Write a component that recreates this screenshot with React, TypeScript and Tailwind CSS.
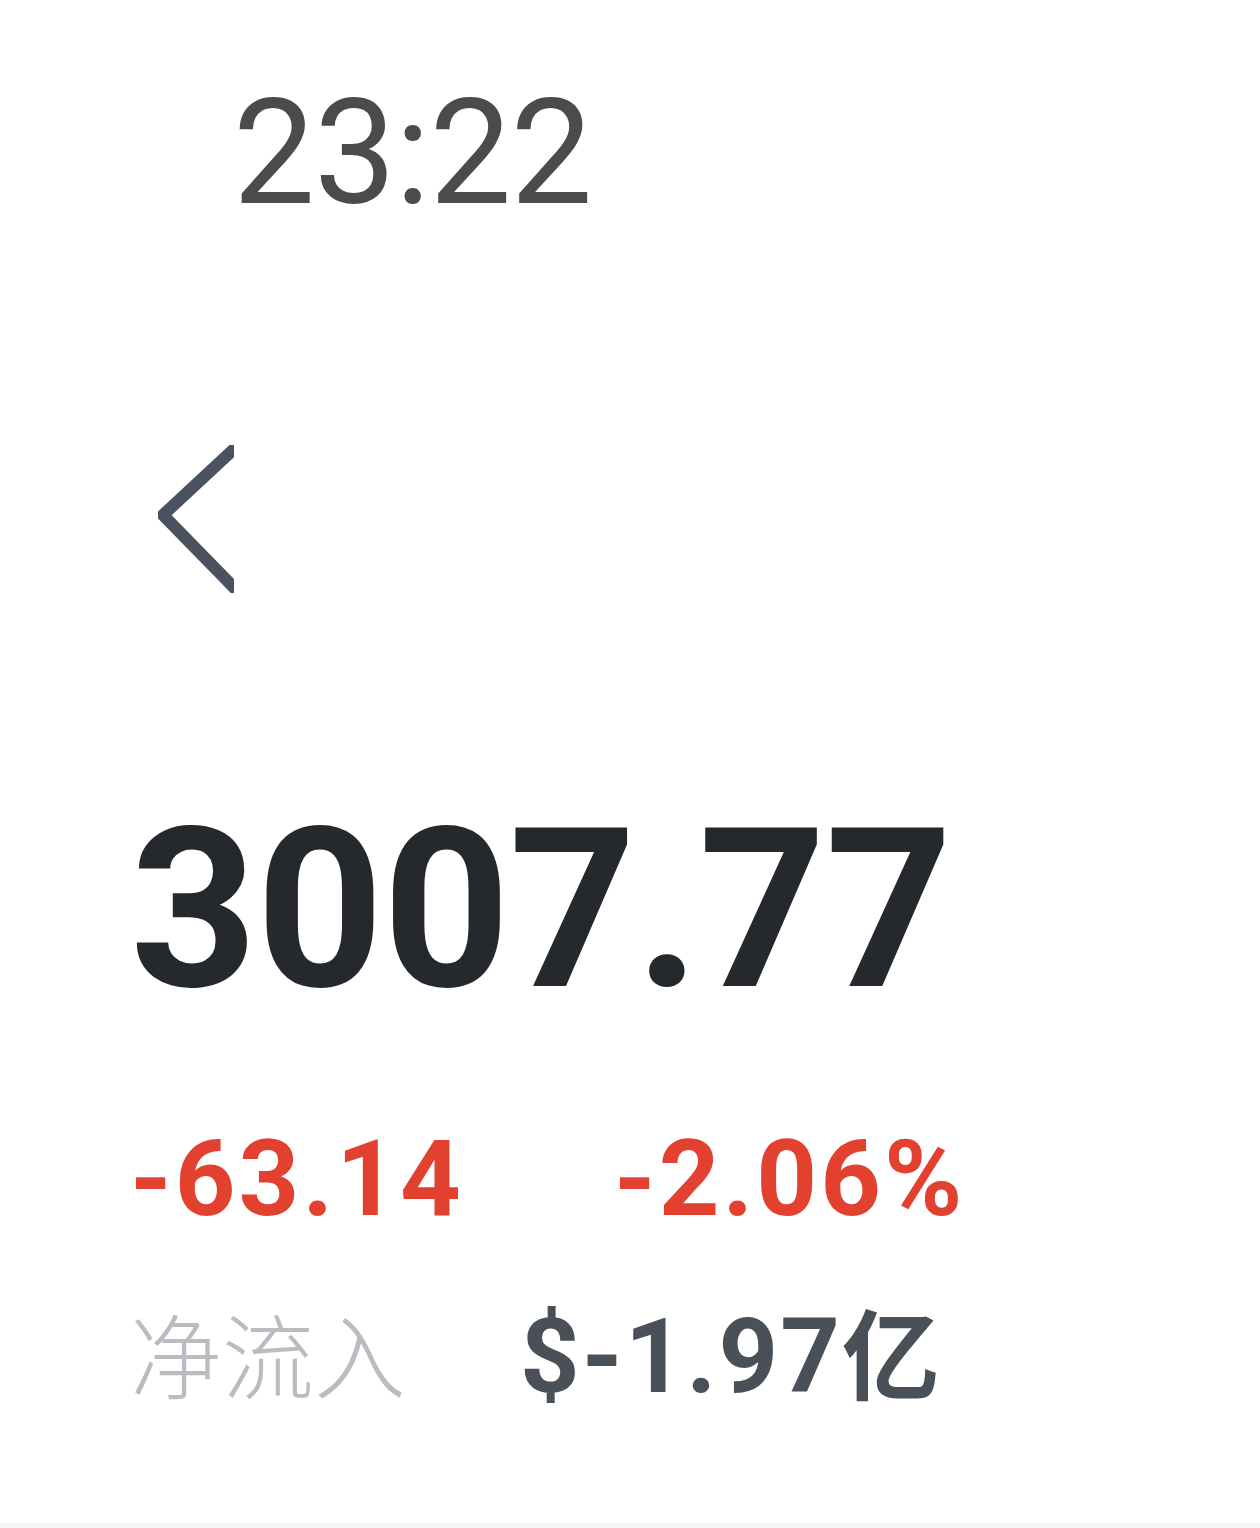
export default function App() {
  const num = { fontFamily: "Roboto, 'Liberation Sans', sans-serif" };
  const cjk = { fontFamily: "Roboto, 'Noto Sans CJK SC', sans-serif" };

  return (
    <div className="h-[1528px] w-[1260px] bg-white flex flex-col pl-[130px] overflow-hidden">
      {/* status bar time */}
      <div
        style={num}
        className="ml-[103px] mt-[81px] text-[146px] leading-none font-normal text-[#4b4b4b] tracking-[-1px]"
      >
        23:22
      </div>

      {/* back chevron */}
      <svg
        width="76"
        height="148"
        viewBox="0 0 76 148"
        className="ml-[28px] mt-[218px] text-[#4a5260]"
      >
        <polyline
          points="90,-9 5,70 90,157"
          fill="none"
          stroke="currentColor"
          strokeWidth="12"
          strokeLinejoin="miter"
        />
      </svg>

      {/* index price */}
      <div
        style={num}
        className="mt-[206px] text-[222px] leading-none font-bold text-[#25282c] tracking-[-1px]"
      >
        3007.77
      </div>

      {/* change row */}
      <div
        style={num}
        className="mt-[105px] flex text-[106px] leading-none font-bold text-[#e2412f] tracking-[3px]"
      >
        <span className="w-[484px]">-63.14</span>
        <span>-2.06%</span>
      </div>

      {/* net inflow */}
      <div className="mt-[73px] flex items-baseline leading-none">
        <span style={cjk} className="w-[390px] text-[92px] font-light text-[#b9bdc1]">
          净流入
        </span>
        <span style={num} className="text-[104px] font-bold text-[#4a5058] tracking-[2px]">
          $-1.97
          <span style={cjk} className="text-[98px] font-bold">
            亿
          </span>
        </span>
      </div>

      <div className="flex-1" />
      <div className="h-[6px] -mx-[130px] bg-[#f6f6f6]" />
    </div>
  );
}
